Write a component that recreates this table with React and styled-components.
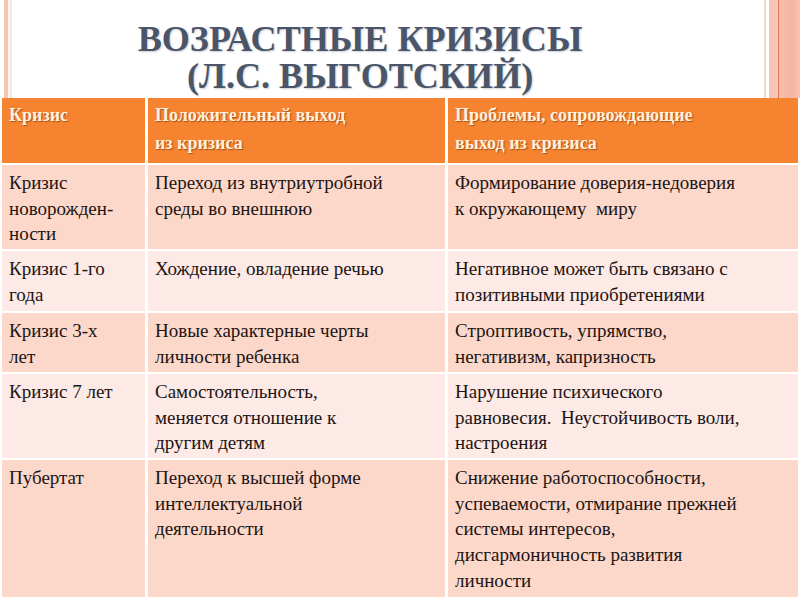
import React from "react";
import styled, { createGlobalStyle } from "styled-components";

const Global = createGlobalStyle`
  html, body { margin: 0; padding: 0; background: #ffffff; }
`;

const Slide = styled.div`
  width: 800px;
  height: 600px;
  background: #ffffff;
  display: flex;
  flex-direction: column;
  overflow: hidden;
`;

const TitleBar = styled.div`
  height: 98px;
  display: flex;
  flex-shrink: 0;
`;

const LeftStripe = styled.div`
  width: 13px;
  margin-left: 4px;
  background: linear-gradient(
    to right,
    #f2c7b0 0px,
    #f2c7b0 4px,
    #fdf4ef 4px,
    #fdf4ef 6px,
    #fbe6dc 6px,
    #fbe6dc 8px,
    #ffffff 8px
  );
`;

const Title = styled.h1`
  flex: 1;
  margin: 0;
  padding: 30px 60px 0 0;
  display: flex;
  flex-direction: column;
  align-items: center;
  gap: 17px;
  font-family: "Liberation Serif", serif;
  font-weight: bold;
  font-size: 19px;
  line-height: 20px;
  color: #4b5569;
  white-space: nowrap;
`;

const TitleLine = styled.span`
  display: inline-block;
  transform: scale(1.9);
  transform-origin: center;
  text-shadow: 0.5px 0.5px 1px rgba(120, 130, 150, 0.4);
`;

const RightStripes = styled.div`
  width: 36px;
  background: linear-gradient(
    to right,
    #f6d2c8 0px,
    #f6d2c8 2px,
    #ffffff 2px,
    #ffffff 5px,
    #f3c3b5 5px,
    #f8c8b8 14px,
    #e2725a 14px,
    #e2725a 15px,
    #f7bfae 15px,
    #f5b5a2 28px,
    #f9c4b4 36px
  );
`;

const Table = styled.div`
  margin-left: 2px;
  width: 796px;
  display: grid;
  grid-template-columns: 143px 297px 350px;
  column-gap: 3px;
  row-gap: 2px;
  background: #ffffff;
`;

const Line = styled.div`
  white-space: nowrap;
`;

const HeadCell = styled.div`
  height: 65px;
  box-sizing: border-box;
  background: #f5832f;
  padding: 3px 2px 0 7px;
  font-family: "Liberation Serif", serif;
  font-weight: bold;
  font-size: 18px;
  line-height: 28px;
  color: #fdf0dc;
  text-shadow: 1px 1px 1px rgba(120, 50, 10, 0.6);
`;

const Cell = styled.div`
  box-sizing: border-box;
  height: ${(p) => p.$h}px;
  background: ${(p) => (p.$dark ? "#fcd8cb" : "#fde9e5")};
  padding: 5px 2px 0 7px;
  font-family: "Liberation Serif", serif;
  font-size: 19px;
  line-height: 25.7px;
  color: #1c1512;
`;

const rows = [
  {
    name: ["Кризис", "новорожден-", "ности"],
    good: ["Переход из внутриутробной", "среды во внешнюю"],
    bad: ["Формирование доверия-недоверия", "к окружающему\u00a0 миру"],
    height: 84,
    dark: true,
  },
  {
    name: ["Кризис 1-го", "года"],
    good: ["Хождение, овладение речью"],
    bad: ["Негативное может быть связано с", "позитивными приобретениями"],
    height: 60,
  },
  {
    name: ["Кризис 3-х", "лет"],
    good: ["Новые характерные черты", "личности ребенка"],
    bad: ["Строптивость, упрямство,", "негативизм, капризность"],
    height: 59,
    dark: true,
  },
  {
    name: ["Кризис 7 лет"],
    good: ["Самостоятельность,", "меняется отношение к", "другим детям"],
    bad: ["Нарушение психического", "равновесия.\u00a0 Неустойчивость воли,", "настроения"],
    height: 84,
  },
  {
    name: ["Пубертат"],
    good: ["Переход к высшей форме", "интеллектуальной", "деятельности"],
    bad: [
      "Снижение работоспособности,",
      "успеваемости, отмирание прежней",
      "системы интересов,",
      "дисгармоничность развития",
      "личности",
    ],
    height: 137,
    dark: true,
  },
];

const Lines = ({ lines }) => lines.map((l, j) => <Line key={j}>{l}</Line>);

function App() {
  return (
    <>
      <Global />
      <Slide>
        <TitleBar>
          <LeftStripe />
          <Title>
            <TitleLine>ВОЗРАСТНЫЕ КРИЗИСЫ</TitleLine>
            <TitleLine>(Л.С. ВЫГОТСКИЙ)</TitleLine>
          </Title>
          <RightStripes />
        </TitleBar>
        <Table>
          <HeadCell>
            <Lines lines={["Кризис"]} />
          </HeadCell>
          <HeadCell>
            <Lines lines={["Положительный выход", "из кризиса"]} />
          </HeadCell>
          <HeadCell>
            <Lines lines={["Проблемы, сопровождающие", "выход из кризиса"]} />
          </HeadCell>
          {rows.map((row, i) => (
            <React.Fragment key={i}>
              <Cell $dark={row.dark} $h={row.height}>
                <Lines lines={row.name} />
              </Cell>
              <Cell $dark={row.dark} $h={row.height}>
                <Lines lines={row.good} />
              </Cell>
              <Cell $dark={row.dark} $h={row.height}>
                <Lines lines={row.bad} />
              </Cell>
            </React.Fragment>
          ))}
        </Table>
      </Slide>
    </>
  );
}

export default App;
